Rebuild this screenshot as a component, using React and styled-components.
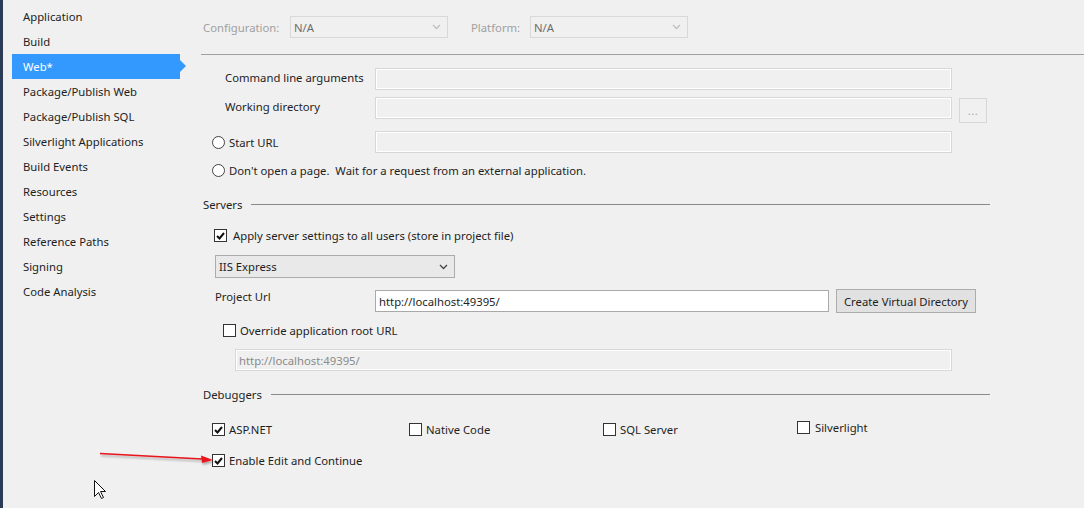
import React from "react";
import styled, { createGlobalStyle } from "styled-components";

const Global = createGlobalStyle`
  html, body { margin: 0; padding: 0; background: #f0f0f0; }
  body { font-family: "Segoe UI", "Noto Sans", "Open Sans", sans-serif; font-size: 11.3px; line-height: 15px; color: #1e1e1e; }
  #root { width: 1084px; height: 508px; overflow: hidden; }
`;

const Page = styled.div`
  position: relative;
  display: flex;
  width: 1084px;
  height: 508px;
  background: #f0f0f0;
  border-left: 3px solid #2b3a57;
  box-sizing: border-box;
`;

const Sidebar = styled.ul`
  list-style: none;
  margin: 0;
  padding: 4px 0 0 9px;
  width: 198px;
  flex: none;
  box-sizing: border-box;
`;

const NavItem = styled.li`
  position: relative;
  height: 25px;
  line-height: 25px;
  width: 168px;
  padding-left: 11px;
  box-sizing: border-box;
  background: ${p => (p.$active ? "#3399ff" : "transparent")};
  color: ${p => (p.$active ? "#fff" : "#1e1e1e")};
  &::after {
    content: "";
    display: ${p => (p.$active ? "block" : "none")};
    position: absolute;
    right: -6px;
    top: 6px;
    border-left: 6px solid #3399ff;
    border-top: 6px solid transparent;
    border-bottom: 6px solid transparent;
  }
`;

const Main = styled.div`
  flex: 1;
  display: flex;
  flex-direction: column;
`;

const TopBar = styled.div`
  display: flex;
  align-items: center;
  height: 22px;
  padding: 16px 0 16px 2px;
  border-bottom: 1px solid #a0a0a0;
`;

const DimLabel = styled.span`
  color: #a0a0a0;
  width: ${p => p.$w}px;
  flex: none;
`;

const Select = styled.div`
  display: flex;
  align-items: center;
  justify-content: space-between;
  width: ${p => p.$w}px;
  height: ${p => p.$h || 22}px;
  box-sizing: border-box;
  padding: 0 6px 0 3px;
  border: 1px solid ${p => (p.$enabled ? "#acacac" : "#d9d9d9")};
  background: ${p => (p.$enabled ? "#e9e9e9" : "#f0f0f0")};
  color: ${p => (p.$enabled ? "#1e1e1e" : "#6d6d6d")};
  margin-right: ${p => p.$mr || 0}px;
  flex: none;
`;

const Chevron = ({ color }) => (
  <svg width="9" height="6" viewBox="0 0 9 6">
    <path d="M1 1 L4.5 4.5 L8 1" fill="none" stroke={color} strokeWidth="1.3" />
  </svg>
);

const Content = styled.div`
  padding-left: 2px;
`;

const FormGrid = styled.div`
  display: grid;
  grid-template-columns: ${p => p.$cols || "165px 577px 28px"};
  grid-auto-rows: 22px;
  column-gap: 7px;
  align-items: center;
  margin-top: ${p => p.$mt || 0}px;
`;

const FieldLabel = styled.div`
  padding-left: ${p => p.$indent || 0}px;
  align-self: ${p => (p.$top ? "start" : "center")};
  margin-top: ${p => (p.$top ? -1 : 0)}px;
  display: flex;
  align-items: center;
  white-space: pre;
  position: relative;
  top: ${p => p.$shift || 0}px;
`;

const TextBox = styled.div`
  height: ${p => p.$h || 22}px;
  width: ${p => (p.$w ? `${p.$w}px` : "auto")};
  box-sizing: border-box;
  border: 1px solid ${p => (p.$white ? "#a9a9a9" : "#d7d7d7")};
  box-shadow: ${p => (p.$white ? "none" : "inset 0 0 0 1px #fff")};
  background: ${p => (p.$white ? "#fff" : "#f0f0f0")};
  color: ${p => (p.$white ? "#1e1e1e" : "#8a8a8a")};
  display: flex;
  align-items: center;
  padding-left: 3px;
  margin-left: ${p => p.$ml || 0}px;
  margin-top: ${p => p.$mt || 0}px;
`;

const SmallButton = styled.div`
  width: 28px;
  height: 25px;
  align-self: start;
  margin-top: 1px;
  box-sizing: border-box;
  border: 1px solid #d7d7d7;
  display: flex;
  align-items: center;
  justify-content: center;
  color: #a8a8a8;
  letter-spacing: 0.5px;
`;

const Button = styled.div`
  width: 140px;
  height: 24px;
  box-sizing: border-box;
  border: 1px solid #adadad;
  background: #e1e1e1;
  display: flex;
  align-items: center;
  justify-content: center;
  white-space: nowrap;
`;

const Radio = styled.span`
  width: 13px;
  height: 13px;
  border-radius: 50%;
  border: 1px solid #444;
  background: #fff;
  box-sizing: border-box;
  margin: 0 4px 0 ${p => p.$ml || 0}px;
  flex: none;
`;

const Box = styled.span`
  width: 13px;
  height: 13px;
  border: 1px solid #333;
  background: #fff;
  box-sizing: border-box;
  display: inline-flex;
  align-items: center;
  justify-content: center;
  flex: none;
`;

const CheckRow = styled.label`
  display: flex;
  align-items: center;
  gap: ${p => p.$gap || 4}px;
  margin: ${p => p.$m || "0"};
  white-space: nowrap;
`;

const Check = ({ checked, label, gap, m }) => (
  <CheckRow $gap={gap} $m={m}>
    <Box>
      {checked && (
        <svg width="9" height="8" viewBox="0 0 9 8">
          <path d="M1 4 L3.5 6.5 L8 1" fill="none" stroke="#111" strokeWidth="2" />
        </svg>
      )}
    </Box>
    <span>{label}</span>
  </CheckRow>
);

const SectionHead = styled.div`
  display: flex;
  align-items: center;
  gap: 9px;
  width: 787px;
  margin-top: ${p => p.$mt}px;
  &::after {
    content: "";
    flex: 1;
    border-top: 1px solid #8a8a8a;
  }
`;

const Indented = styled.div`
  padding-left: ${p => p.$pl}px;
  margin-top: ${p => p.$mt || 0}px;
  display: flex;
  align-items: center;
  height: ${p => p.$h || 15}px;
`;

const DebugGrid = styled.div`
  display: grid;
  grid-template-columns: 197px 194px 194px 194px;
  padding-left: 9px;
  height: 15px;
  align-items: center;
  margin-top: 20px;
`;

const Overlay = styled.svg`
  position: absolute;
  left: 0;
  top: 0;
  pointer-events: none;
`;

const nav = [
  "Application",
  "Build",
  "Web*",
  "Package/Publish Web",
  "Package/Publish SQL",
  "Silverlight Applications",
  "Build Events",
  "Resources",
  "Settings",
  "Reference Paths",
  "Signing",
  "Code Analysis",
];

export default function App() {
  return (
    <>
      <Global />
      <Page>
        <Sidebar>
          {nav.map(n => (
            <NavItem key={n} $active={n === "Web*"}>{n}</NavItem>
          ))}
        </Sidebar>
        <Main>
          <TopBar>
            <DimLabel $w={87}>Configuration:</DimLabel>
            <Select $w={158} $mr={23}>
              N/A <Chevron color="#c0c0c0" />
            </Select>
            <DimLabel $w={59}>Platform:</DimLabel>
            <Select $w={158}>
              N/A <Chevron color="#c0c0c0" />
            </Select>
          </TopBar>
          <Content>
            <FormGrid $mt={13}>
              <FieldLabel $indent={22} $shift={-2}>Command line arguments</FieldLabel>
              <TextBox />
              <span />
            </FormGrid>
            <FormGrid $mt={7}>
              <FieldLabel $indent={22} $shift={-2}>Working directory</FieldLabel>
              <TextBox />
              <SmallButton>...</SmallButton>
            </FormGrid>
            <FormGrid $mt={12}>
              <FieldLabel $indent={9}><Radio />Start URL</FieldLabel>
              <TextBox />
              <span />
            </FormGrid>
            <Indented $pl={9} $mt={10}>
              <Radio />
              <span style={{ whiteSpace: "pre" }}>Don't open a page.  Wait for a request from an external application.</span>
            </Indented>

            <SectionHead $mt={19}>Servers</SectionHead>
            <Indented $pl={11} $mt={16}>
              <Check checked gap={6} label="Apply server settings to all users (store in project file)" />
            </Indented>
            <Indented $pl={12} $mt={12} $h={23}>
              <Select $w={240} $h={23} $enabled>
                IIS Express <Chevron color="#444" />
              </Select>
            </Indented>
            <FormGrid $mt={12} $cols="165px 454px 140px">
              <FieldLabel $indent={12} $top>Project Url</FieldLabel>
              <TextBox $white>http://localhost:49395/</TextBox>
              <Button>Create Virtual Directory</Button>
            </FormGrid>
            <Indented $pl={20} $mt={11}>
              <Check gap={4} label="Override application root URL" />
            </Indented>
            <TextBox $w={717} $ml={32} $mt={11}>http://localhost:49395/</TextBox>

            <SectionHead $mt={16}>Debuggers</SectionHead>
            <DebugGrid>
              <Check checked label="ASP.NET" />
              <Check label="Native Code" />
              <Check label="SQL Server" />
              <Check label="Silverlight" gap={5} m="-4px 0 0 0" />
            </DebugGrid>
            <Indented $pl={9} $mt={16}>
              <Check checked label="Enable Edit and Continue" />
            </Indented>
          </Content>
        </Main>
        <Overlay width="1084" height="508" viewBox="0 0 1084 508">
          <defs>
            <filter id="sh" x="-10%" y="-100%" width="120%" height="300%">
              <feDropShadow dx="1" dy="2" stdDeviation="1.2" floodColor="#000" floodOpacity="0.3" />
            </filter>
          </defs>
          <g filter="url(#sh)" transform="translate(-3 0)">
            <path d="M100 453.5 L202 459" stroke="#e8141a" strokeWidth="1.6" fill="none" />
            <path d="M213 460 L201 455.5 L202 463 Z" fill="#e8141a" />
          </g>
          <path
            d="M94.5 480.5 L94.5 496.5 L98.5 492.5 L101.5 498.5 L103.5 497.5 L100.5 491.5 L105.5 491.5 Z"
            fill="#fff"
            stroke="#111"
            strokeWidth="1"
            transform="translate(-3 0)"
          />
        </Overlay>
      </Page>
    </>
  );
}
